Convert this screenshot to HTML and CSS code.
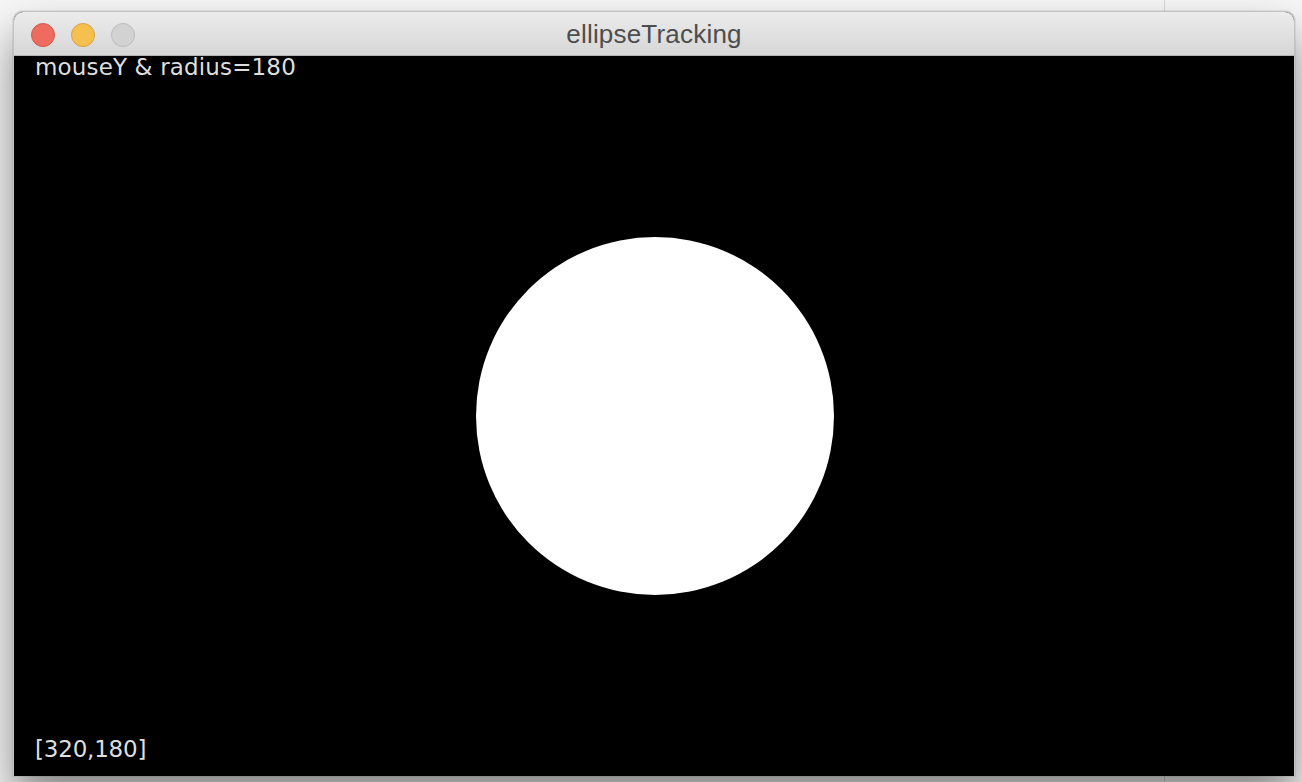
FILE: index.html
```html
<!DOCTYPE html>
<html>
<head>
<meta charset="utf-8">
<title>ellipseTracking</title>
<link rel="stylesheet" href="styles.css">
</head>
<body>
<div class="desktop">
  <div class="window">
    <div class="titlebar">
      <div class="lights">
        <span class="light close"></span>
        <span class="light min"></span>
        <span class="light max"></span>
      </div>
      <div class="title">ellipseTracking</div>
    </div>
    <div class="canvas">
      <div class="label label-top">mouseY &amp; radius=180</div>
      <div class="circle"></div>
      <div class="label label-bottom">[320,180]</div>
    </div>
  </div>
</div>
</body>
</html>
```
FILE: styles.css
```css
html, body {
  margin: 0;
  padding: 0;
}
body {
  width: 1302px;
  height: 782px;
  overflow: hidden;
  background: #f6f6f6;
}
.desktop {
  width: 1302px;
  height: 782px;
  box-sizing: border-box;
  padding: 11px 0 0 13px;
  background:
    linear-gradient(to right, transparent 1164px, #d6d6d6 1164px, #d6d6d6 1165px, transparent 1165px),
    #f6f6f6;
  overflow: hidden;
}
.window {
  width: 1282px;
  box-sizing: border-box;
  border: 1px solid #c2c2c2;
  border-bottom: none;
  border-radius: 10px 10px 0 0;
  box-shadow: 0 24px 44px rgba(0, 0, 0, 0.45), 0 0 0 1px rgba(0, 0, 0, 0.06);
  background: #000;
}
.titlebar {
  height: 43px;
  border-bottom: 1px solid #b4b4b4;
  border-radius: 9px 9px 0 0;
  background: linear-gradient(to bottom, #ececec, #d6d6d6);
  display: grid;
  grid-template-columns: 1fr;
  align-items: center;
}
.lights, .title {
  grid-row: 1;
  grid-column: 1;
}
.lights {
  display: flex;
  gap: 16px;
  padding-left: 17px;
  padding-top: 1px;
}
.light {
  width: 22px;
  height: 22px;
  border-radius: 50%;
  border: 1px solid transparent;
}
.close {
  background: #ed6b5f;
  border-color: #d4574b;
}
.min {
  background: #f6c04f;
  border-color: #d9a13f;
}
.max {
  background: #d2d2d2;
  border-color: #bcbcbc;
}
.title {
  text-align: center;
  font-family: "Liberation Sans", Arial, sans-serif;
  font-size: 26px;
  letter-spacing: 0.2px;
  color: #4d4d4d;
  line-height: 43px;
  padding-top: 1px;
}
.canvas {
  height: 720px;
  background: #000;
  display: grid;
  grid-template-columns: 1fr;
  grid-template-rows: 1fr;
}
.canvas > * {
  grid-row: 1;
  grid-column: 1;
}
.label {
  justify-self: start;
  margin-left: 21px;
  font-family: "DejaVu Sans", sans-serif;
  font-size: 23px;
  line-height: 23px;
  letter-spacing: 0.15px;
  color: #dedede;
}
.label-top {
  align-self: start;
}
.label-bottom {
  align-self: end;
  margin-bottom: 15px;
  margin-left: 21px;
  letter-spacing: -0.2px;
}
.circle {
  align-self: center;
  justify-self: center;
  margin-left: 2px;
  width: 358px;
  height: 358px;
  border-radius: 50%;
  background: #fff;
}
```
